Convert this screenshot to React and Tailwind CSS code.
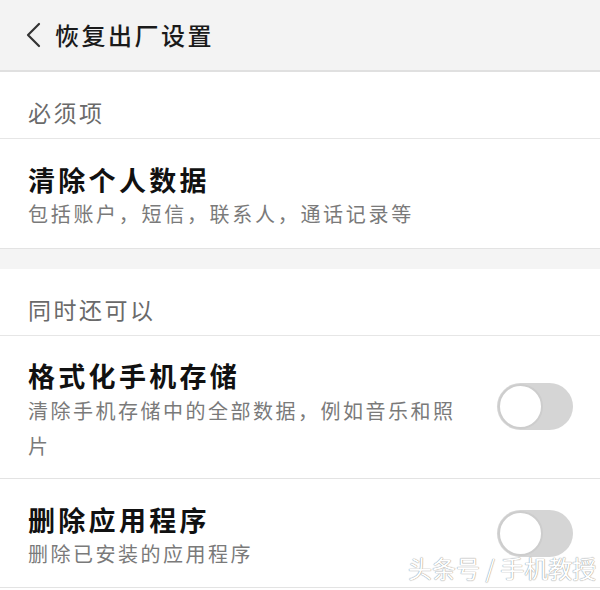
import React from "react";

function Toggle() {
  return (
    <div className="w-[76px] h-[47px] rounded-full bg-[#d5d5d5] flex items-center pl-[1px] shrink-0">
      <div className="w-[45px] h-[45px] rounded-full bg-white border-2 border-[#cdcdcd]" />
    </div>
  );
}

export default function App() {
  const font = { fontFamily: '"Noto Sans CJK SC", "Noto Sans", sans-serif' };
  return (
    <div className="relative w-[600px] h-[590px] overflow-hidden bg-white" style={font}>
      {/* header */}
      <div className="h-[72px] bg-[#f3f3f3] border-b-2 border-[#e0e0e0] flex items-center pl-[26px]">
        <svg width="16" height="26" viewBox="0 0 16 26" className="shrink-0">
          <polyline points="13,2 2,13 13,24" fill="none" stroke="#333" strokeWidth="2.2" strokeLinecap="round" strokeLinejoin="round" />
        </svg>
        <span className="ml-[13px] text-[24px] leading-[30px] tracking-[2.5px] font-medium text-[#1a1a1a]">恢复出厂设置</span>
      </div>

      {/* section 1 label */}
      <div className="h-[67px] border-b border-[#e6e6e6] pt-[25px] pl-[28px]">
        <div className="text-[23px] leading-[30px] tracking-[2.5px] text-[#6a6a6a]">必须项</div>
      </div>

      {/* item 1 */}
      <div className="h-[110px] border-b border-[#e3e3e3] pt-[24px] pl-[28px]">
        <div className="text-[27px] leading-[34px] tracking-[3.3px] font-bold text-[#111]">清除个人数据</div>
        <div className="text-[20px] leading-[34px] tracking-[2.7px] text-[#7a7a7a]">包括账户，短信，联系人，通话记录等</div>
      </div>

      {/* gray band */}
      <div className="h-[20px] bg-[#f4f4f4]" />

      {/* section 2 label */}
      <div className="h-[67px] border-b border-[#e6e6e6] pt-[25px] pl-[28px]">
        <div className="text-[23px] leading-[30px] tracking-[2.5px] text-[#6a6a6a]">同时还可以</div>
      </div>

      {/* item 2 */}
      <div className="h-[143px] border-b border-[#e3e3e3] pl-[28px] pr-[27px] flex items-center justify-between">
        <div className="w-[440px] self-start pt-[23px]">
          <div className="text-[27px] leading-[34px] tracking-[3.3px] font-bold text-[#111]">格式化手机存储</div>
          <div className="text-[20px] leading-[35px] tracking-[2.5px] text-[#7a7a7a]">清除手机存储中的全部数据，例如音乐和照片</div>
        </div>
        <div className="mt-[-2px]">
          <Toggle />
        </div>
      </div>

      {/* item 3 */}
      <div className="h-[109px] border-b border-[#e3e3e3] pl-[28px] pr-[27px] flex items-center justify-between">
        <div className="self-start pt-[24px]">
          <div className="text-[27px] leading-[34px] tracking-[3.3px] font-bold text-[#111]">删除应用程序</div>
          <div className="text-[20px] leading-[34px] tracking-[2.5px] text-[#7a7a7a]">删除已安装的应用程序</div>
        </div>
        <Toggle />
      </div>

      {/* watermark */}
      <div className="absolute left-[408px] top-[553px] text-[24px] leading-[30px] text-white whitespace-nowrap [text-shadow:0_0_1px_#888,0_0_1px_#aaa]">
        头条号 / 手机教授
      </div>
    </div>
  );
}
